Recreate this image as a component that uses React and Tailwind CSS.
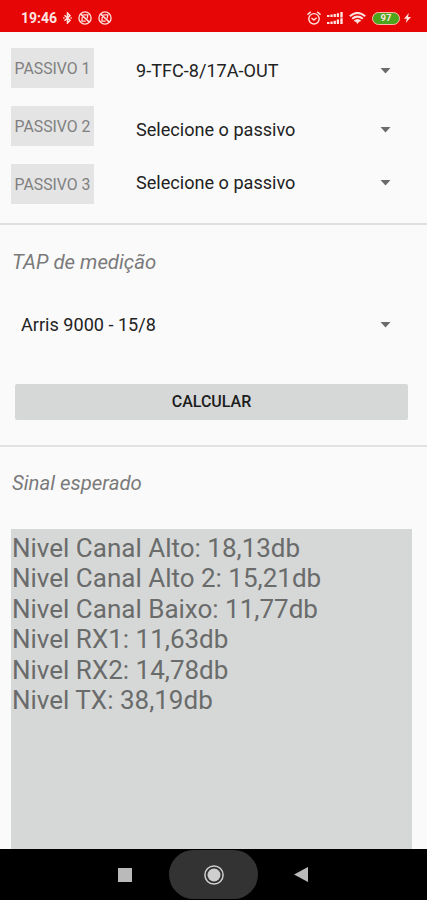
import React from 'react';

const passivos = [
  { label: 'PASSIVO 1', value: '9-TFC-8/17A-OUT', offset: 'pt-[5px]' },
  { label: 'PASSIVO 2', value: 'Selecione o passivo', offset: 'pt-[7px]' },
  { label: 'PASSIVO 3', value: 'Selecione o passivo', offset: 'pb-[3px]' },
];

const results = [
  'Nivel Canal Alto: 18,13db',
  'Nivel Canal Alto 2: 15,21db',
  'Nivel Canal Baixo: 11,77db',
  'Nivel RX1: 11,63db',
  'Nivel RX2: 14,78db',
  'Nivel TX: 38,19db',
];

function Caret() {
  return (
    <svg className="w-[11px] h-1.5 shrink-0" viewBox="0 0 11 6" fill="#6b6b6b">
      <path d="M.5 0h10l-5 5.5z" />
    </svg>
  );
}

function BlockedIcon() {
  return (
    <svg className="w-3.5 h-3.5" viewBox="0 0 14 14" fill="none" stroke="#ffe0dc">
      <circle cx="7" cy="7" r="6.1" strokeWidth="1.3" />
      <path d="M2.8 3.2l8.4 7.8" strokeWidth="1.7" />
      <path d="M5.2 3.9h4.6l-.6 3.6M4.2 6l-.3 4.2h3.8" strokeWidth="1.3" />
    </svg>
  );
}

function StatusBar() {
  return (
    <header className="h-8 shrink-0 bg-[#e60606] pt-1 pl-[21px] pr-4 flex items-center text-[#ffe4e0]">
      <span className="w-[37px] text-[14px] leading-4 font-bold whitespace-nowrap">19:46</span>
      <svg className="ml-[5px] w-[9px] h-3" viewBox="0 0 9 12" fill="none" stroke="currentColor" strokeWidth="1.5">
        <path d="M1.5 3.3l5.5 5L4.5 11V1L7 3.7l-5.5 5" />
        <path d="M.2 6h1.3M7.5 6h1.3" />
      </svg>
      <div className="ml-[6px] flex gap-1.5">
        <BlockedIcon />
        <BlockedIcon />
      </div>

      <div className="ml-auto flex items-center">
        <svg className="w-3.5 h-3.5" viewBox="0 0 14 14" fill="none" stroke="currentColor" strokeWidth="1.4">
          <circle cx="7" cy="7.8" r="5.2" />
          <path d="M.5 3.6L3.7 .9M13.5 3.6L10.3 .9M4.5 7l2.4 2.1 2.7-2.4" />
        </svg>
        <svg className="ml-[6px] w-4 h-3.5" viewBox="0 0 16 14" fill="currentColor">
          <path d="M0 4h2.5v2H0zM3.4 3.5h2.3V6H3.4zM6.6 2.9h2.3V6H6.6zM9.8 2.2H12V6H9.8zM13.3 1h2.4v5.4h-2.4z" />
          <path d="M0 11h2.5v2H0zM3.4 10.5h2.3V13H3.4zM6.6 9.7h2.3V13H6.6zM9.8 8.6H12V13H9.8zM13.3 7.2h2.4V13h-2.4z" />
        </svg>
        <svg className="ml-[6px] w-[17px] h-3" viewBox="0 0 17 12" fill="none" stroke="currentColor" strokeWidth="2">
          <path d="M.8 4.2Q8.5-2.4 16.2 4.2M3.2 6.8q5.3-4.4 10.6 0M5.5 9.2q3-2.5 6 0" />
          <path d="M6.7 9.5L8.5 12l1.8-2.5q-1.8-1.3-3.6 0z" fill="currentColor" stroke="none" />
        </svg>
        <span className="ml-[6px] w-[28px] h-[13px] rounded-full border-[1.5px] border-[#ffb9ad] bg-[#4ca51b] flex items-center justify-center text-[9.5px] leading-none font-bold">
          97
        </span>
        <svg className="ml-1 w-[7px] h-2.5" viewBox="0 0 7 10" fill="currentColor">
          <path d="M4.8 0L0 5.7h2.8L1.8 10 7 4.1H4z" />
        </svg>
      </div>
    </header>
  );
}

function NavBar() {
  return (
    <nav className="h-[51px] shrink-0 bg-black flex items-center pl-[118px]">
      <span className="w-3.5 h-3.5 bg-[#bababa]" />
      <span className="ml-[37px] w-[89px] h-[49px] rounded-full bg-[#333333] flex items-center justify-center">
        <svg className="w-5 h-5" viewBox="0 0 20 20">
          <circle cx="10" cy="10" r="9.1" fill="none" stroke="#cfcfcf" strokeWidth="1.5" />
          <circle cx="10" cy="10" r="6.5" fill="#cfcfcf" />
        </svg>
      </span>
      <svg className="ml-[36px] w-3.5 h-[15px]" viewBox="0 0 14 15" fill="#bababa">
        <path d="M14 0v15L0 7.5z" />
      </svg>
    </nav>
  );
}

function App() {
  return (
    <div className="h-screen flex flex-col overflow-hidden bg-[#fafafa] font-['Roboto',sans-serif]">
      <StatusBar />

      {/* Passivos */}
      <section className="h-[193px] shrink-0 border-b-2 border-[#e0e0e0] pt-4 pl-[11px] flex flex-col gap-[18px]">
        {passivos.map((p) => (
          <div key={p.label} className="h-10 flex items-center">
            <button className="w-[83px] h-10 pt-0.5 bg-[#e4e4e4] text-[#808080] text-[15.8px] whitespace-nowrap">
              {p.label}
            </button>
            <div className={`ml-[42px] w-[255px] h-10 flex items-center justify-between text-[18.1px] text-[#222222] ${p.offset}`}>
              {p.value}
              <Caret />
            </div>
          </div>
        ))}
      </section>

      {/* TAP */}
      <section className="h-[222px] shrink-0 border-b-2 border-[#e2e2e2] pt-[23px]">
        <h2 className="pl-3 text-[20.4px] leading-7 italic text-[#7a7a7a]">TAP de medição</h2>
        <div className="mt-[35px] h-7 pl-[21px] pr-9 flex items-center justify-between text-[18.1px] text-[#222222]">
          Arris 9000 - 15/8
          <Caret />
        </div>
        <button className="mt-[45px] ml-[15px] w-[393px] h-9 rounded-xs bg-[#d6d8d7] text-[16px] font-medium text-[#1c1c1c]">
          CALCULAR
        </button>
      </section>

      {/* Resultado */}
      <section className="flex-1 min-h-0 flex flex-col pt-[22px]">
        <h2 className="pl-3 text-[20.4px] leading-7 italic text-[#7a7a7a]">Sinal esperado</h2>
        <div className="mt-8 ml-[11px] w-[401px] flex-1 bg-[#d6d8d7] pt-1 pl-px text-[26px] leading-[30.4px] text-[#6a6b6b]">
          {results.map((line) => (
            <p key={line}>{line}</p>
          ))}
        </div>
      </section>

      <NavBar />
    </div>
  );
}

export default App;
